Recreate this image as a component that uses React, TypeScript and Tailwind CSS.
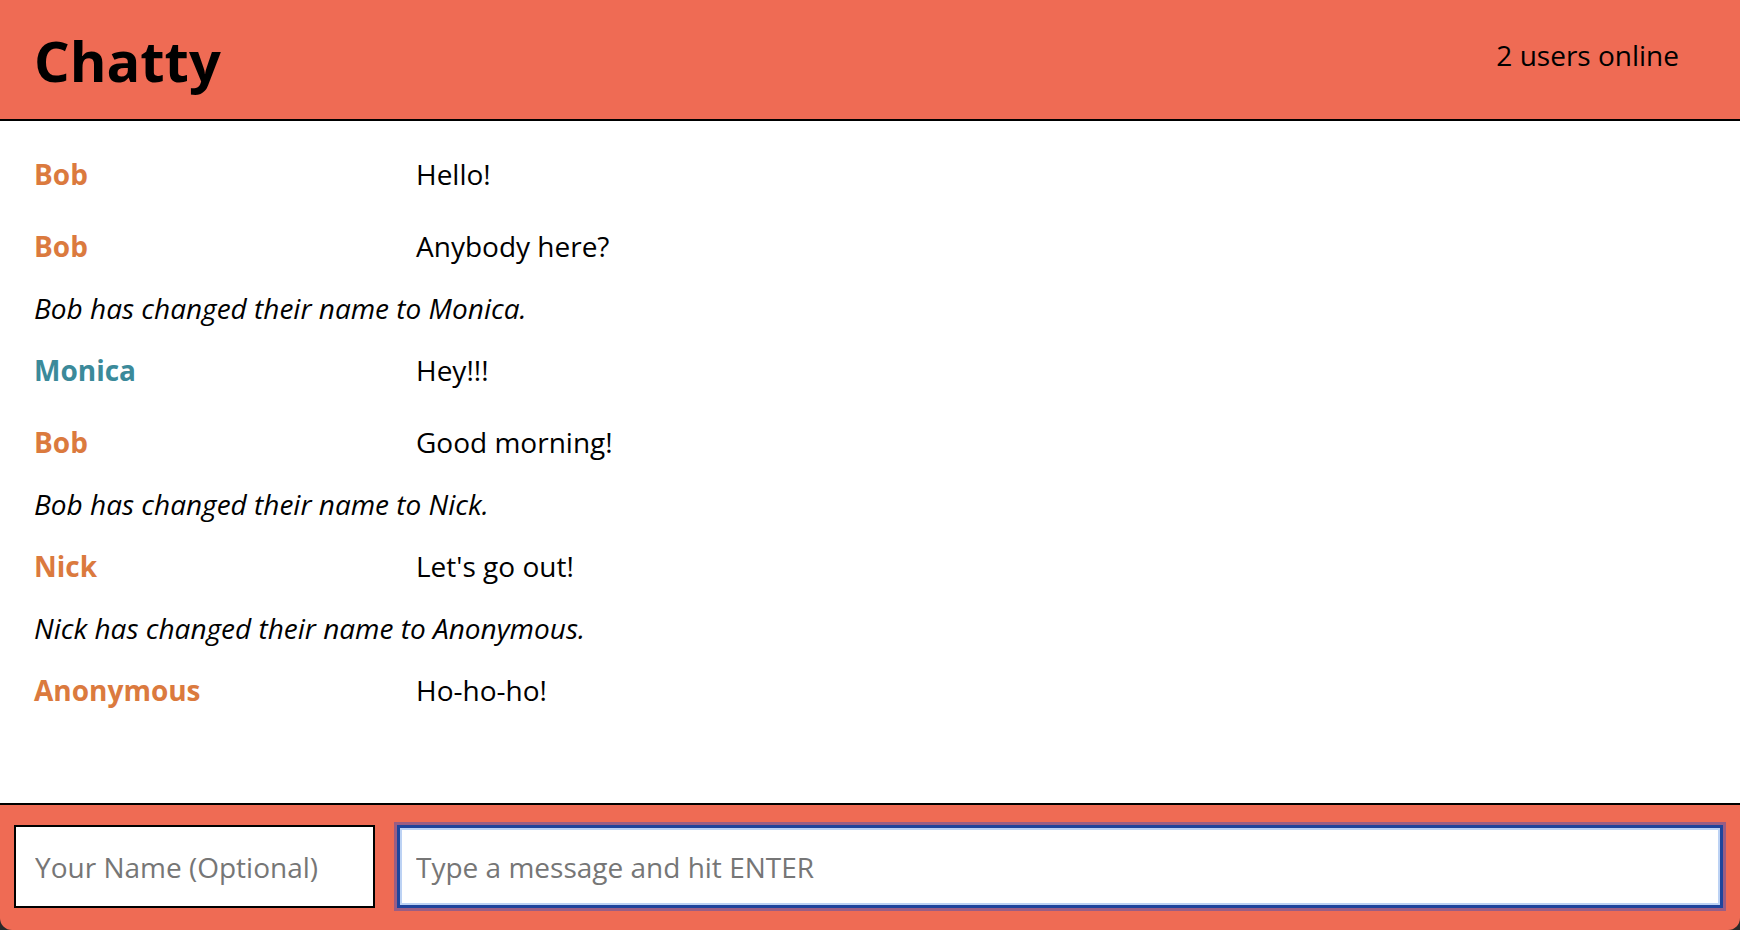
import React from "react";

type Item =
  | { kind: "msg"; user: string; color: string; text: string }
  | { kind: "sys"; text: string };

const items: Item[] = [
  { kind: "msg", user: "Bob", color: "text-[#db7a3e]", text: "Hello!" },
  { kind: "msg", user: "Bob", color: "text-[#db7a3e]", text: "Anybody here?" },
  { kind: "sys", text: "Bob has changed their name to Monica." },
  { kind: "msg", user: "Monica", color: "text-[#3b8a9a]", text: "Hey!!!" },
  { kind: "msg", user: "Bob", color: "text-[#db7a3e]", text: "Good morning!" },
  { kind: "sys", text: "Bob has changed their name to Nick." },
  { kind: "msg", user: "Nick", color: "text-[#db7a3e]", text: "Let's go out!" },
  { kind: "sys", text: "Nick has changed their name to Anonymous." },
  { kind: "msg", user: "Anonymous", color: "text-[#db7a3e]", text: "Ho-ho-ho!" },
];

export default function App() {
  return (
    <div
      className="flex h-[930px] w-full flex-col bg-[#2a2a2a] text-black"
      style={{ fontFamily: '"Open Sans", "Noto Sans", sans-serif' }}
    >
      <header className="flex h-[121px] shrink-0 items-center justify-between border-b-2 border-black bg-[#ef6b54] pl-[34px] pr-[61px]">
        <h1 className="text-[56px] font-bold leading-none">Chatty</h1>
        <span className="mb-[9px] text-[28px] leading-none">2 users online</span>
      </header>

      <main className="flex-1 overflow-hidden bg-white pt-[17px] text-[28px] leading-[42px]">
        {items.map((it, i) =>
          it.kind === "msg" ? (
            <div key={i} className="flex py-[15px] pl-[34px]">
              <span className={`w-[382px] shrink-0 font-bold ${it.color}`}>{it.user}</span>
              <span>{it.text}</span>
            </div>
          ) : (
            <div key={i} className="py-[5px] pl-[34px] italic">
              {it.text}
            </div>
          )
        )}
      </main>

      <footer className="flex h-[127px] shrink-0 items-start rounded-b-[12px] border-t-2 border-black bg-[#ef6b54] pl-[14px] pr-[17px] pt-[20px]">
        <input
          readOnly
          placeholder="Your Name (Optional)"
          className="h-[83px] w-[361px] shrink-0 border-2 border-black bg-white pl-[19px] text-[28px] outline-none placeholder:text-[#767676]"
        />
        <input
          readOnly
          placeholder="Type a message and hit ENTER"
          className="ml-[22px] h-[83px] flex-1 border-[3px] border-[#1f449c] bg-white pl-[16px] text-[28px] shadow-[inset_0_0_0_2px_#bcd2f4,0_0_0_3px_rgba(70,80,180,0.5)] outline-none placeholder:text-[#767676]"
        />
      </footer>
    </div>
  );
}
